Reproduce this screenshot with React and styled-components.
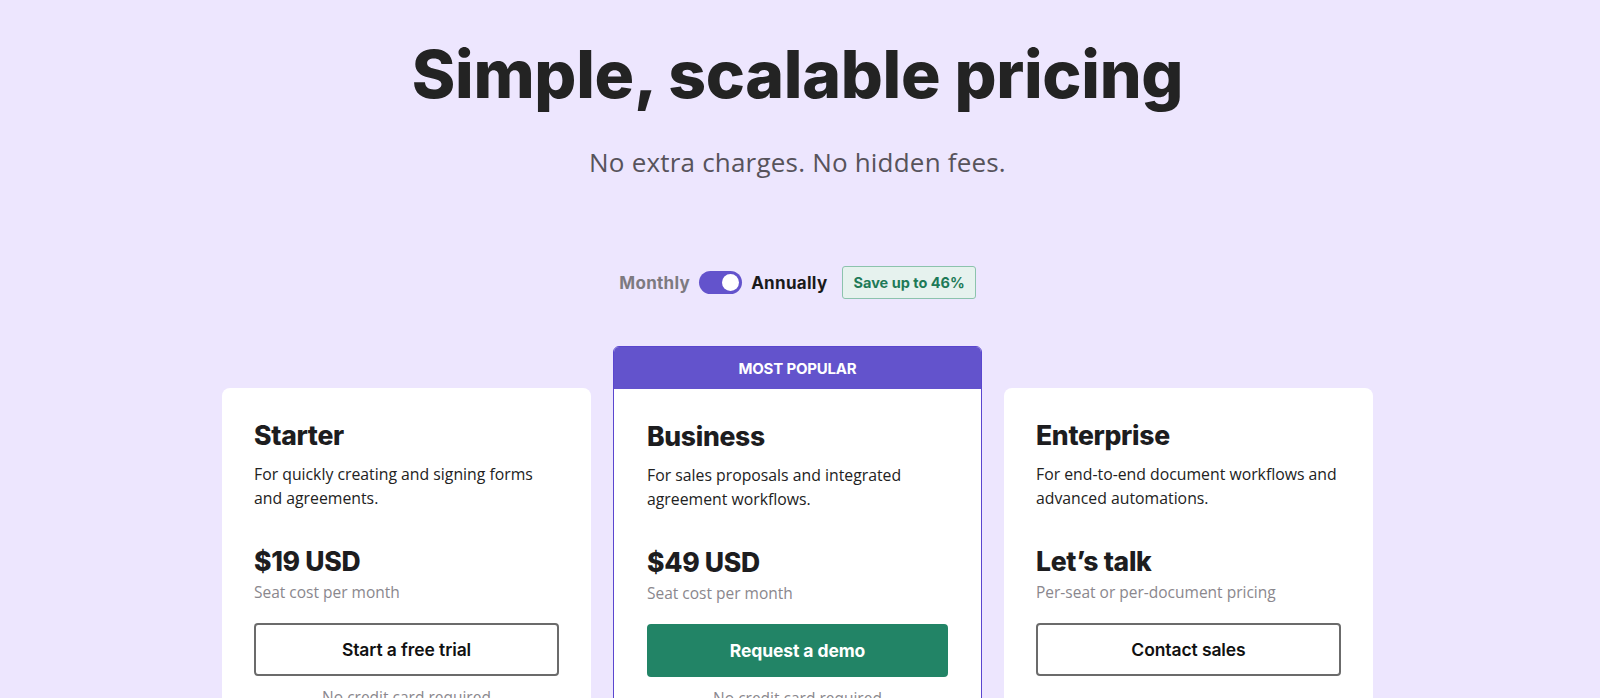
import React from "react";
import styled, { createGlobalStyle } from "styled-components";

const Global = createGlobalStyle`
  html, body { margin: 0; padding: 0; }
  body {
    background: #ede6fe;
    font-family: Inter, "Open Sans", sans-serif;
    color: #1d1d1f;
    overflow: hidden;
  }
`;

const Page = styled.main`
  display: flex;
  flex-direction: column;
  align-items: center;
  padding: 34px 5px 0 0;
`;

const Title = styled.h1`
  margin: 0;
  font-family: Inter, sans-serif;
  font-weight: 800;
  font-size: 66px;
  line-height: 80px;
  letter-spacing: -0.3px;
  color: #232323;
`;

const Subtitle = styled.p`
  margin: 31px 0 0;
  font-family: "Open Sans", sans-serif;
  font-weight: 400;
  font-size: 26px;
  line-height: 34px;
  letter-spacing: 0.2px;
  color: #57535b;
`;

const ToggleRow = styled.div`
  display: flex;
  align-items: center;
  margin-top: 87px;
  height: 33px;
`;

const ToggleLabel = styled.span`
  font-family: Inter, sans-serif;
  font-weight: 700;
  font-size: 17px;
  letter-spacing: 0.3px;
  color: ${(p) => (p.$active ? "#1a1a1a" : "#7d7a80")};
`;

const Switch = styled.span`
  position: relative;
  width: 43px;
  height: 23px;
  border-radius: 12px;
  background: #6353cc;
  margin: 0 9px;
  flex: none;
`;

const Knob = styled.span`
  position: absolute;
  top: 3px;
  right: 3px;
  width: 17px;
  height: 17px;
  border-radius: 50%;
  background: #fff;
`;

const Badge = styled.span`
  margin-left: 15px;
  height: 33px;
  box-sizing: border-box;
  padding: 0 10px;
  display: flex;
  align-items: center;
  border: 1px solid #8cc3ad;
  border-radius: 3px;
  background: #e6f2ee;
  color: #1e7a57;
  font-family: Inter, sans-serif;
  font-weight: 700;
  font-size: 14.5px;
`;

const Cards = styled.div`
  display: grid;
  grid-template-columns: repeat(3, 369px);
  column-gap: 22px;
  align-items: end;
  margin-top: 47px;
`;

const Card = styled.section`
  background: #fff;
  border-radius: ${(p) => (p.$featured ? "6px" : "8px")};
  border: ${(p) => (p.$featured ? "1px solid #5a46cf" : "none")};
  overflow: hidden;
  display: flex;
  flex-direction: column;
  height: ${(p) => (p.$featured ? "420px" : "378px")};
  box-sizing: border-box;
`;

const Ribbon = styled.div`
  background: #6353cc;
  color: #fff;
  height: 42px;
  flex: none;
  display: flex;
  align-items: center;
  justify-content: center;
  font-family: Inter, sans-serif;
  font-weight: 700;
  font-size: 15px;
  letter-spacing: -0.2px;
`;

const Body = styled.div`
  padding: 31px ${(p) => (p.$featured ? "33px" : "32px")} 0;
  display: flex;
  flex-direction: column;
`;

const PlanName = styled.h2`
  margin: 0;
  font-family: Inter, sans-serif;
  font-weight: 800;
  font-size: 26.5px;
  line-height: 32px;
  letter-spacing: -0.3px;
  color: #1d1d1f;
`;

const Desc = styled.p`
  margin: 12px 0 0;
  font-family: "Open Sans", sans-serif;
  font-size: 15.8px;
  line-height: 23.5px;
  color: #222;
  height: 47px;
`;

const Price = styled.div`
  margin-top: 35px;
  font-family: Inter, sans-serif;
  font-weight: 800;
  font-size: 26.5px;
  line-height: 32px;
  letter-spacing: -0.3px;
  color: #1d1d1f;
`;

const PriceNote = styled.div`
  margin-top: 4px;
  font-family: "Open Sans", sans-serif;
  font-size: 15.5px;
  line-height: 22px;
  color: #8a878d;
`;

const Button = styled.button`
  margin-top: 20px;
  height: 53px;
  width: 100%;
  box-sizing: border-box;
  border-radius: 4px;
  border: 2px solid ${(p) => (p.$primary ? "#228466" : "#6b6b6b")};
  background: ${(p) => (p.$primary ? "#228466" : "#fff")};
  color: ${(p) => (p.$primary ? "#fff" : "#111")};
  font-family: Inter, sans-serif;
  font-weight: ${(p) => (p.$primary ? 700 : 600)};
  font-size: 17.5px;
  letter-spacing: -0.1px;
  cursor: pointer;
`;

const Foot = styled.div`
  margin-top: 10px;
  text-align: center;
  font-family: "Open Sans", sans-serif;
  font-size: 15.5px;
  line-height: 22px;
  color: #8a878d;
`;

const plans = [
  {
    name: "Starter",
    desc: "For quickly creating and signing forms and agreements.",
    price: "$19 USD",
    note: "Seat cost per month",
    cta: "Start a free trial",
    foot: "No credit card required",
  },
  {
    name: "Business",
    desc: "For sales proposals and integrated agreement workflows.",
    price: "$49 USD",
    note: "Seat cost per month",
    cta: "Request a demo",
    foot: "No credit card required",
    featured: true,
  },
  {
    name: "Enterprise",
    desc: "For end-to-end document workflows and advanced automations.",
    price: "Let\u2019s talk",
    note: "Per-seat or per-document pricing",
    cta: "Contact sales",
  },
];

export default function App() {
  return (
    <>
      <Global />
      <Page>
        <Title>Simple, scalable pricing</Title>
        <Subtitle>No extra charges. No hidden fees.</Subtitle>
        <ToggleRow>
          <ToggleLabel>Monthly</ToggleLabel>
          <Switch>
            <Knob />
          </Switch>
          <ToggleLabel $active>Annually</ToggleLabel>
          <Badge>Save up to 46%</Badge>
        </ToggleRow>
        <Cards>
          {plans.map((p) => (
            <Card key={p.name} $featured={p.featured}>
              {p.featured && <Ribbon>MOST POPULAR</Ribbon>}
              <Body $featured={p.featured}>
                <PlanName>{p.name}</PlanName>
                <Desc>{p.desc}</Desc>
                <Price>{p.price}</Price>
                <PriceNote>{p.note}</PriceNote>
                <Button $primary={p.featured}>{p.cta}</Button>
                {p.foot && <Foot>{p.foot}</Foot>}
              </Body>
            </Card>
          ))}
        </Cards>
      </Page>
    </>
  );
}
